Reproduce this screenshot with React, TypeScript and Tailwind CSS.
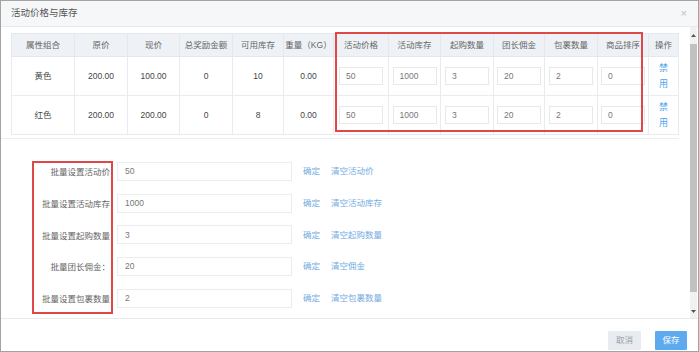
import React from "react";

const cols = [63, 53, 52, 53, 51, 50, 55, 52, 53, 51, 53, 51, 30];
const heads = ["属性组合", "原价", "现价", "总奖励金额", "可用库存", "重量（KG）", "活动价格", "活动库存", "起购数量", "团长佣金", "包裹数量", "商品排序", "操作"];
const rows = [
  { name: "黄色", price: "200.00", now: "100.00", reward: "0", stock: "10", weight: "0.00", vals: ["50", "1000", "3", "20", "2", "0"] },
  { name: "红色", price: "200.00", now: "200.00", reward: "0", stock: "8", weight: "0.00", vals: ["50", "1000", "3", "20", "2", "0"] },
];
const batch = [
  { label: "批量设置活动价", value: "50", clear: "清空活动价" },
  { label: "批量设置活动库存", value: "1000", clear: "清空活动库存" },
  { label: "批量设置起购数量", value: "3", clear: "清空起购数量" },
  { label: "批量团长佣金：", value: "20", clear: "清空佣金" },
  { label: "批量设置包裹数量", value: "2", clear: "清空包裹数量" },
];

export default function App() {
  return (
    <div
      className="w-[699px] h-[352px] bg-white border border-[#a3a3a3] flex flex-col overflow-hidden"
      style={{ fontFamily: '"Liberation Sans", "Noto Sans CJK SC", sans-serif' }}
    >
      {/* header */}
      <div className="h-[26px] shrink-0 bg-[#f5f7f9] border-b border-[#e6e9ed] flex items-center justify-between pl-[10px] pr-[11px]">
        <span className="text-[9.5px] text-[#555]">活动价格与库存</span>
        <span className="text-[11px] text-[#c0c0c0] leading-none">×</span>
      </div>

      {/* body */}
      <div className="flex-1 flex min-h-0">
        <div className="flex-1 pl-[10px] pt-[6px]">
          <div className="relative w-[667px]">
            <table className="table-fixed border-collapse w-[667px] text-[8.5px]">
              <colgroup>
                {cols.map((w, i) => (
                  <col key={i} style={{ width: w }} />
                ))}
              </colgroup>
              <thead>
                <tr className="h-[23px] bg-[#eef2f6]">
                  {heads.map((h, i) => (
                    <th key={i} className="border border-[#e3e8ed] font-normal text-[#666] text-center p-0 whitespace-nowrap">
                      {h}
                    </th>
                  ))}
                </tr>
              </thead>
              <tbody>
                {rows.map((r, ri) => (
                  <tr key={ri} className="h-[39px]">
                    {[r.name, r.price, r.now, r.reward, r.stock, r.weight].map((t, i) => (
                      <td key={i} className="border border-[#e8ecf0] text-center text-[#444] p-0">
                        {t}
                      </td>
                    ))}
                    {r.vals.map((v, i) => (
                      <td key={i} className="border border-[#e8ecf0] p-0">
                        <div className="flex justify-center">
                          <div className="w-[44px] h-[18px] border border-[#e6e8ec] bg-white flex items-center pl-[6px] text-[#777]">
                            {v}
                          </div>
                        </div>
                      </td>
                    ))}
                    <td className="border border-[#e8ecf0] p-0 text-center text-[#4aa3ea] leading-[16px] text-[9px]">
                      禁<br />用
                    </td>
                  </tr>
                ))}
              </tbody>
            </table>
            <div className="absolute left-[324px] top-[-1px] w-[308px] h-[100px] border-2 border-[#e04848] pointer-events-none" />
          </div>
          <div className="w-[678px] -ml-[10px] mt-[3px] border-t border-[#eceff2]" />

          {/* batch form */}
          <div className="flex mt-[23px] ml-[21px]">
            <div className="w-[81px] border-2 border-[#e04848] pb-[3px] flex flex-col gap-[12.7px] -mt-[1px]">
              {batch.map((b, i) => (
                <div key={i} className="h-[19px] flex items-center justify-end pr-[1px] text-[8.5px] text-[#666] whitespace-nowrap">
                  {b.label}
                </div>
              ))}
            </div>
            <div className="flex flex-col gap-[12.7px] ml-[4px]">
              {batch.map((b, i) => (
                <div key={i} className="h-[19px] flex items-center">
                  <div className="w-[175px] h-[19px] border border-[#eaedf0] flex items-center pl-[7px] text-[8.5px] text-[#777]">
                    {b.value}
                  </div>
                  <span className="ml-[11px] text-[8.5px] text-[#72acdf]">确定</span>
                  <span className="ml-[11px] text-[8.5px] text-[#72acdf]">{b.clear}</span>
                </div>
              ))}
            </div>
          </div>
        </div>

        {/* scrollbar */}
        <div className="w-[7px] mr-[1px] bg-[#f1f1f1] flex flex-col items-center">
          <div className="h-[17px] w-full flex items-center justify-center">
            <svg width="5" height="3" viewBox="0 0 5 3"><path d="M0 3 L2.5 0 L5 3 Z" fill="#555" /></svg>
          </div>
          <div className="w-full h-[248px] bg-[#c1c1c1]" />
          <div className="flex-1" />
          <div className="h-[14px] w-full flex items-center justify-center">
            <svg width="5" height="3" viewBox="0 0 5 3"><path d="M0 0 L2.5 3 L5 0 Z" fill="#555" /></svg>
          </div>
        </div>
      </div>

      {/* footer */}
      <div className="h-[33px] shrink-0 border-t border-[#e6e9ed] flex items-end justify-end pr-[11px] pb-[1px] gap-[14px]">
        <div className="w-[33px] h-[19px] bg-[#e8ecf0] text-[#9aa0a6] text-[8.5px] flex items-center justify-center rounded-[1px]">取消</div>
        <div className="w-[32px] h-[19px] bg-[#5eaaee] text-white text-[8.5px] flex items-center justify-center rounded-[1px]">保存</div>
      </div>
    </div>
  );
}
